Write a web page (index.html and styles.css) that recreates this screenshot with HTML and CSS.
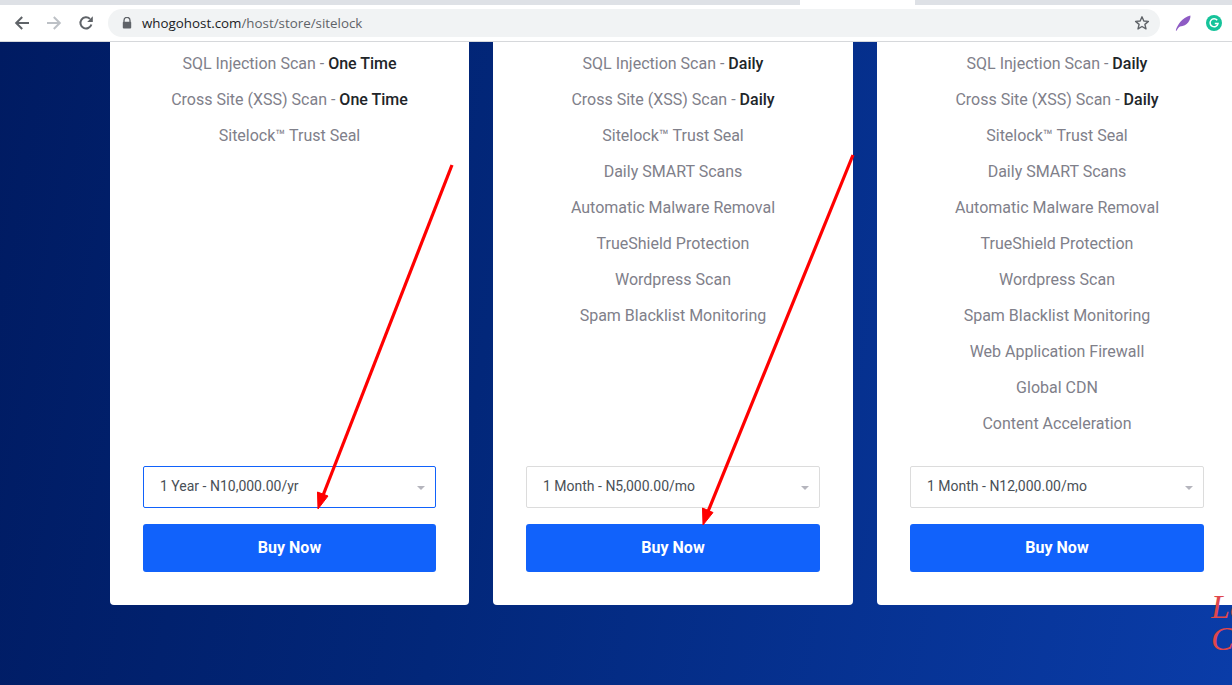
FILE: index.html
```html
<!DOCTYPE html>
<html lang="en">
<head>
  <meta charset="UTF-8" />
  <meta name="viewport" content="width=device-width, initial-scale=1.0"/>
  <title>Sitelock - Whogohost</title>
  <link rel="stylesheet" href="styles.css">
</head>
<body>
  <div class="tabstrip">
    <div class="tab-gap"></div>
    <div class="tab-rest"></div>
  </div>

  <div class="toolbar">
    <svg class="nav-icon" viewBox="0 0 16 16"><path d="M15 8H2.500M8.200 2 2.200 8l6 6" fill="none" stroke="#5f6368" stroke-width="2"/></svg>
    <svg class="nav-icon" viewBox="0 0 16 16"><path d="M1 8h12.500M7.800 2l6 6-6 6" fill="none" stroke="#bdc1c6" stroke-width="2"/></svg>
    <svg class="nav-icon" viewBox="0 0 16 16"><path d="M13.400 9.500A5.600 5.600 0 1 1 12 3.900" fill="none" stroke="#5f6368" stroke-width="2"/><path d="M9.200 6.900h5.600V1.300z" fill="#5f6368"/></svg>
    <div class="omnibox">
      <svg class="lock" viewBox="0 0 10 12"><path d="M2 5V3.400a3 3 0 0 1 6 0V5" fill="none" stroke="#5f6368" stroke-width="1.300"/><rect x="0.800" y="4.800" width="8.400" height="6.700" rx="1" fill="#5f6368"/></svg>
      <span class="url"><span class="host">whogohost.com</span>/host/store/sitelock</span>
      <svg class="star" viewBox="0 0 16 16"><path d="M8 1.800 9.800 6l4.600.4-3.500 3 1.100 4.500L8 11.500l-4 2.400 1.100-4.500-3.500-3L6.200 6z" fill="none" stroke="#5f6368" stroke-width="1.400" stroke-linejoin="round"/></svg>
    </div>
    <svg class="feather" viewBox="0 0 16 16"><path d="M.8 15.600C2.200 10 7 3 15.400.6 15.800 5.200 12.500 11 5 11.600 3.600 12.600 2.400 14 1.600 15.800z" fill="#8e5bc4"/></svg>
    <svg class="grammarly" viewBox="0 0 16 16"><circle cx="8" cy="8" r="8" fill="#15c39a"/><path d="M11.200 5.300A4 4 0 1 0 12 8.600H8.800" fill="none" stroke="#fff" stroke-width="1.500"/></svg>
  </div>

  <div class="page">
    <div class="plans">
      <div class="plan">
        <ul class="features">
          <li>SQL Injection Scan - <b>One Time</b></li>
          <li>Cross Site (XSS) Scan - <b>One Time</b></li>
          <li>Sitelock™ Trust Seal</li>
        </ul>
        <div class="term is-focus">1 Year - N10,000.00/yr</div>
        <button class="buy">Buy Now</button>
      </div>

      <div class="plan">
        <ul class="features">
          <li>SQL Injection Scan - <b>Daily</b></li>
          <li>Cross Site (XSS) Scan - <b>Daily</b></li>
          <li>Sitelock™ Trust Seal</li>
          <li>Daily SMART Scans</li>
          <li>Automatic Malware Removal</li>
          <li>TrueShield Protection</li>
          <li>Wordpress Scan</li>
          <li>Spam Blacklist Monitoring</li>
        </ul>
        <div class="term">1 Month - N5,000.00/mo</div>
        <button class="buy">Buy Now</button>
      </div>

      <div class="plan">
        <ul class="features">
          <li>SQL Injection Scan - <b>Daily</b></li>
          <li>Cross Site (XSS) Scan - <b>Daily</b></li>
          <li>Sitelock™ Trust Seal</li>
          <li>Daily SMART Scans</li>
          <li>Automatic Malware Removal</li>
          <li>TrueShield Protection</li>
          <li>Wordpress Scan</li>
          <li>Spam Blacklist Monitoring</li>
          <li>Web Application Firewall</li>
          <li>Global CDN</li>
          <li>Content Acceleration</li>
        </ul>
        <div class="term">1 Month - N12,000.00/mo</div>
        <button class="buy">Buy Now</button>
      </div>
    </div>

    <div class="chat-badge">Let's<br>Chat</div>

    <!-- red arrows drawn on top of the screenshot -->
    <svg class="arrows" viewBox="0 0 1232 643">
      <path d="M452 123 322 456" fill="none" stroke="#ff0000" stroke-width="3.200"/>
      <path d="M318 467 317.500 450 328 454z" fill="#ff0000" stroke="#ff0000" stroke-width="1"/>
      <path d="M853 113 707 472" fill="none" stroke="#ff0000" stroke-width="3.200"/>
      <path d="M703 483 702.500 466 713 470.500z" fill="#ff0000" stroke="#ff0000" stroke-width="1"/>
    </svg>
  </div>
</body>
</html>
```

FILE: styles.css
```css
* {
  box-sizing: border-box;
}

body {
  margin: 0;
  height: 685px;
  overflow: hidden;
  font-family: Roboto, 'Liberation Sans', sans-serif;
  background-color: #fff;
}

/* browser chrome */
.tabstrip {
  display: flex;
  height: 5px;
  background-color: #dee1e6;
}

.tab-gap {
  width: 115px;
  margin-left: 800px;
  background-color: #fff;
}

.tab-rest {
  flex: 1;
  background-color: #dee1e6;
}

.toolbar {
  display: flex;
  align-items: center;
  height: 37px;
  padding: 4px 10px 4px 14px;
  background-color: #fff;
  border-bottom: 1px solid #d6d8db;
}

.nav-icon {
  width: 16px;
  height: 16px;
  margin-right: 16px;
}

.omnibox {
  display: flex;
  align-items: center;
  flex: 1;
  height: 28px;
  margin: 0 15px 0 -2px;
  padding: 0 10px 0 14px;
  background-color: #f1f3f4;
  border-radius: 14px;
}

.lock {
  width: 10px;
  height: 12px;
  margin-right: 10px;
}

.url {
  flex: 1;
  font-family: 'Open Sans', sans-serif;
  font-size: 13.350px;
  color: #5f6368;
}

.host {
  color: #202124;
}

.star {
  width: 16px;
  height: 16px;
}

.feather {
  width: 16px;
  height: 16px;
  margin-right: 15px;
}

.grammarly {
  width: 16px;
  height: 16px;
}

/* page */
.page {
  position: relative;
  height: 643px;
  overflow: hidden;
  background: linear-gradient(100deg, #001b62 0%, #02277a 40%, #0a3ca8 100%);
}

.plans {
  display: grid;
  grid-template-columns: 359px 360px 360px;
  gap: 24px;
  width: 1200px;
  height: 563px;
  margin-left: 110px;
}

.plan {
  display: flex;
  flex-direction: column;
  padding: 4px 33px 33px;
  background-color: #fff;
  border-radius: 0 0 4px 4px;
}

.features {
  flex: 1;
  margin: 0;
  padding: 0;
  list-style: none;
  text-align: center;
}

.features li {
  height: 36px;
  font-size: 16px;
  line-height: 36px;
  color: #80808a;
}

.features b {
  font-weight: 500;
  color: #212529;
}

.term {
  position: relative;
  height: 42px;
  padding-left: 16px;
  font-size: 14px;
  line-height: 38px;
  color: #495057;
  background-color: #fff;
  border: 1px solid #dcdcdc;
  border-radius: 2px;
}

.term::after {
  content: '';
  position: absolute;
  top: 19px;
  right: 10px;
  border-top: 4px solid #b5b5bd;
  border-left: 4px solid transparent;
  border-right: 4px solid transparent;
}

.term.is-focus {
  border-color: #1162fb;
}

.buy {
  display: block;
  width: 100%;
  height: 48px;
  margin-top: 16px;
  padding: 0 0 2px;
  font-family: inherit;
  font-size: 16px;
  font-weight: 700;
  color: #fff;
  background-color: #1162fb;
  border: none;
  border-radius: 3px;
}

.chat-badge {
  position: absolute;
  top: 549px;
  left: 1211px;
  font-family: 'Liberation Serif', serif;
  font-size: 34px;
  font-style: italic;
  line-height: 32px;
  color: #e0474c;
}

.arrows {
  position: absolute;
  top: 0;
  left: 0;
  width: 1232px;
  height: 643px;
}
```
